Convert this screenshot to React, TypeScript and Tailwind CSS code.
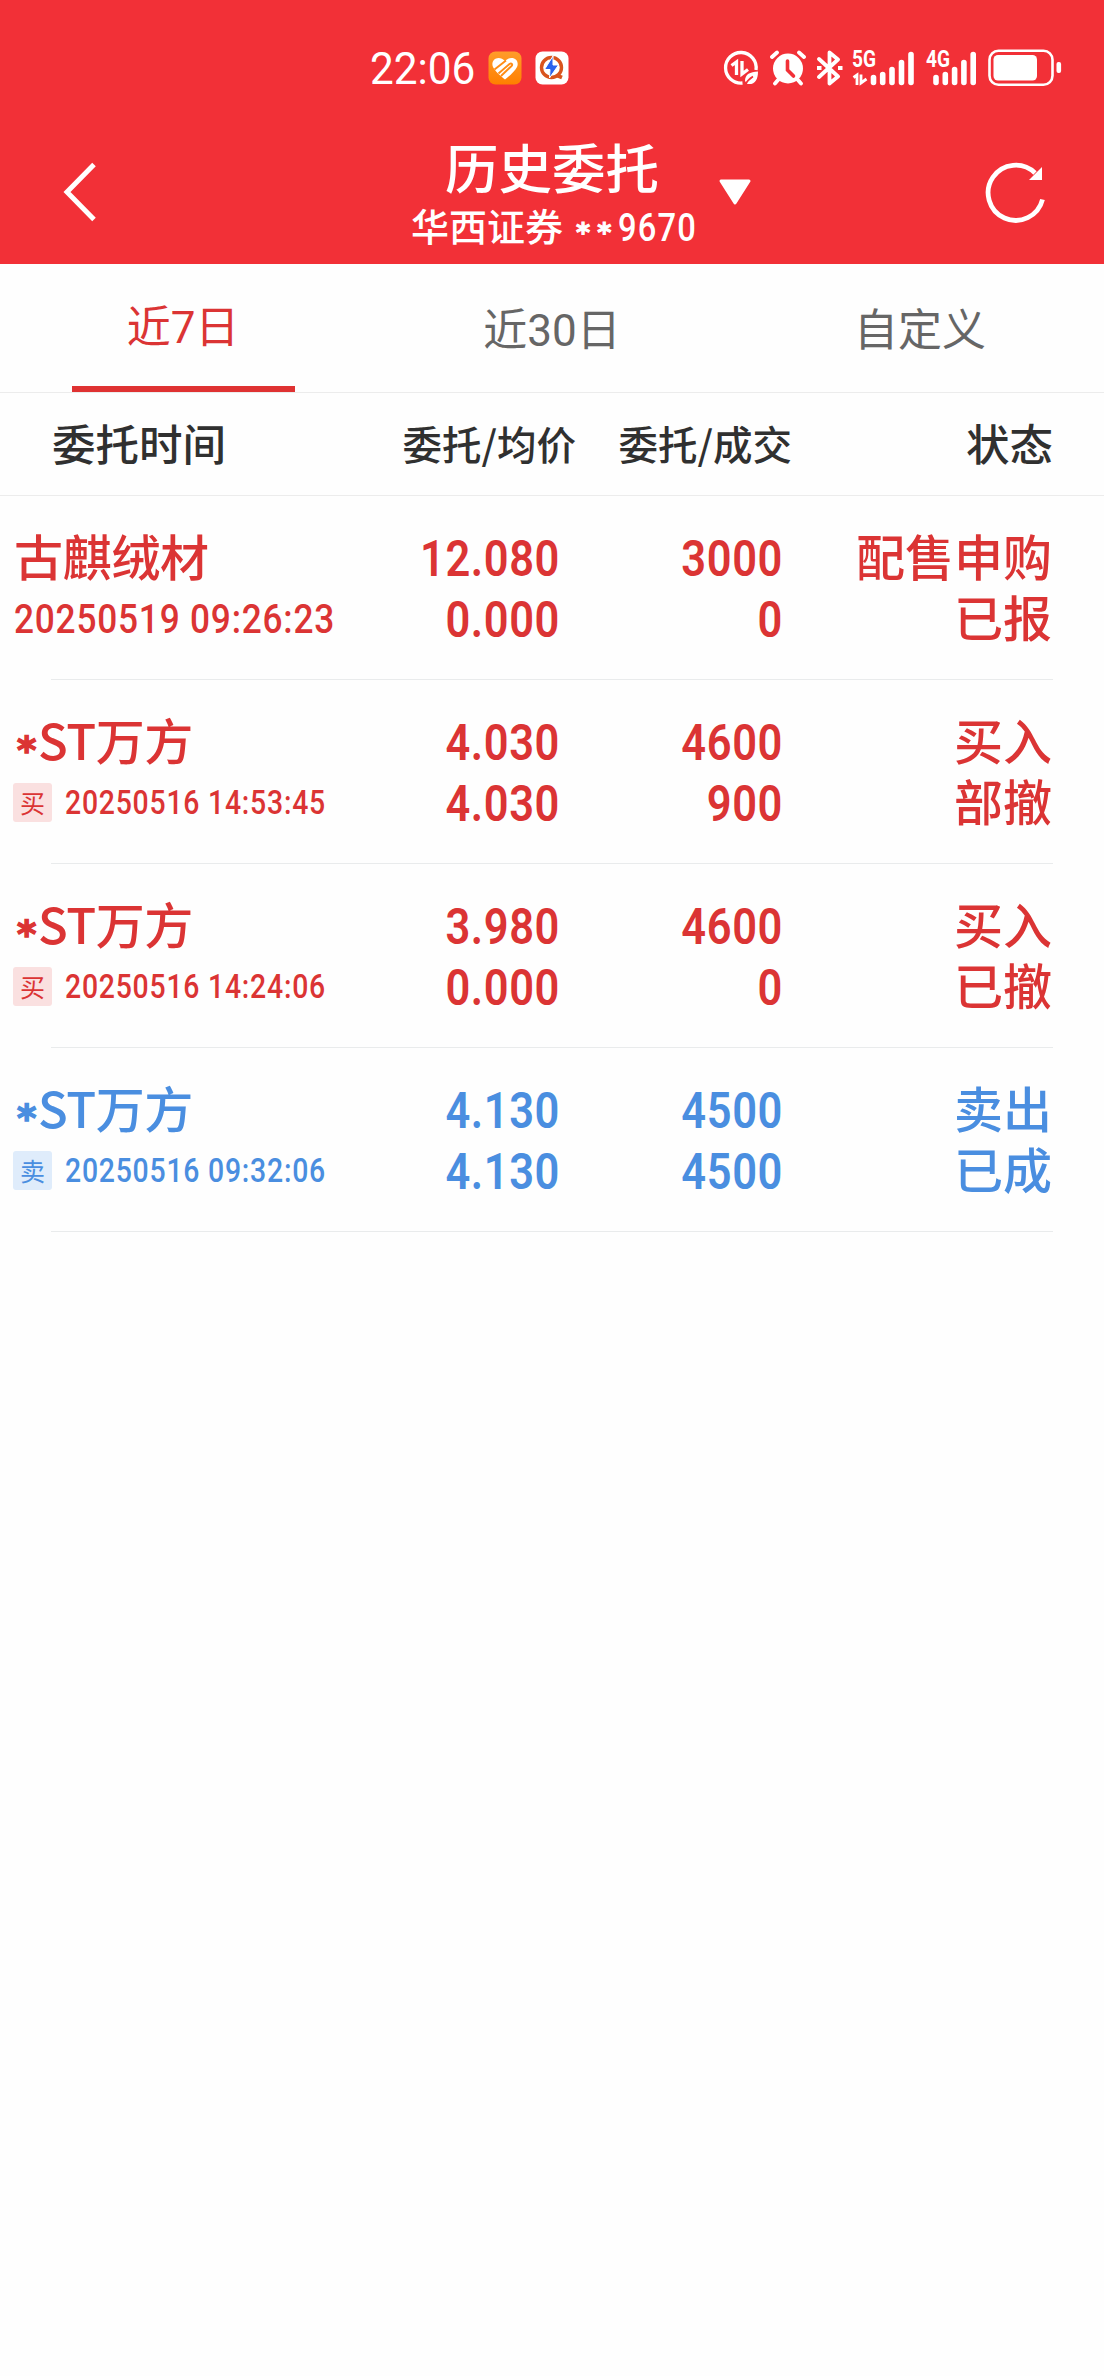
type Order = {
  name: string;
  star?: boolean;
  tag?: string;
  time: string;
  price: string;
  avg: string;
  amount: string;
  deal: string;
  side: string;
  status: string;
};

const orders: Order[] = [
  {
    name: "古麒绒材",
    time: "20250519 09:26:23",
    price: "12.080",
    avg: "0.000",
    amount: "3000",
    deal: "0",
    side: "配售申购",
    status: "已报",
  },
  {
    name: "ST万方",
    star: true,
    tag: "买",
    time: "20250516 14:53:45",
    price: "4.030",
    avg: "4.030",
    amount: "4600",
    deal: "900",
    side: "买入",
    status: "部撤",
  },
  {
    name: "ST万方",
    star: true,
    tag: "买",
    time: "20250516 14:24:06",
    price: "3.980",
    avg: "0.000",
    amount: "4600",
    deal: "0",
    side: "买入",
    status: "已撤",
  },
  {
    name: "ST万方",
    star: true,
    tag: "卖",
    time: "20250516 09:32:06",
    price: "4.130",
    avg: "4.130",
    amount: "4500",
    deal: "4500",
    side: "卖出",
    status: "已成",
  },
];

function Signal({ label, data }: { label: string; data?: boolean }) {
  return (
    <svg className="overflow-visible" width="64" height="40" viewBox="0 0 64 40" fill="#fff">
      <text
        x="0"
        y="18.5"
        fontSize="23"
        fontWeight="700"
        textLength="24"
        lengthAdjust="spacingAndGlyphs"
        className="font-['Roboto',sans-serif]"
      >
        {label}
      </text>
      {data && (
        <path
          d="M1.5 29.5l3.5-2.5v10M9 26.5v8.5l5.5-4"
          fill="none"
          stroke="#fff"
          strokeWidth="2.8"
        />
      )}
      <path
        d={
          data
            ? "M21.5 29.5v5M30.7 26.5v8M40 21.5v13M49.5 14.5v20M59 6.5v28"
            : "M10 29.5v5M19.3 26.5v8M28.6 21.5v13M37.9 14.5v20M47.2 6.5v28"
        }
        stroke="#fff"
        strokeWidth="5.6"
        strokeLinecap="round"
      />
    </svg>
  );
}

function StatusBar() {
  return (
    <div className="flex h-[136px] items-center pl-[370px]">
      <span className="w-[118px] font-['Roboto',sans-serif] text-[45px] leading-none">
        <span className="inline-block origin-left scale-x-[0.94]">22:06</span>
      </span>
      {/* running app badges */}
      <svg width="34" height="34" viewBox="0 0 34 34">
        <defs>
          <linearGradient id="orange" x1="0" y1="0" x2="0" y2="1">
            <stop offset="0" stopColor="#ff9c2b" />
            <stop offset="1" stopColor="#ff7f00" />
          </linearGradient>
        </defs>
        <rect x="0.5" y="0.5" width="33" height="33" rx="7" fill="url(#orange)" />
        <path
          d="M17 28.5C13 25.5 7 20 5 16c-2-4.500 1-9 5.500-9 2.500 0 4.500 1 6.500 3 2-2 4-3 6.500-3 5 0 7.500 4.500 5.500 9-2 4-8 9.500-12 12.500z"
          fill="#fff"
        />
        <path d="M6.500 18.500L18 9.500M10.500 22.500l11-9.500c2-1.500 3.500.5 2 2l-10.500 10" fill="none" stroke="#ff8c14" strokeWidth="1.9" />
      </svg>
      <svg className="ml-[13px]" width="34" height="34" viewBox="0 0 34 34">
        <rect x="0.5" y="0.5" width="33" height="33" rx="7" fill="#fff" />
        <circle cx="16.5" cy="16.5" r="10" fill="none" stroke="#d9541e" strokeWidth="3.4" />
        <path d="M22 24.5l5 2" stroke="#d9541e" strokeWidth="4" />
        <path d="M18 5L9.5 18.5h5.5L14.5 27 23.5 14h-5.5z" fill="#2a62ec" stroke="#fff" strokeWidth="1" />
      </svg>
      {/* system icons */}
      <svg className="ml-[154px]" width="36" height="36" viewBox="0 0 36 36" fill="none" stroke="#fff">
        <path d="M19.5 33A15.3 15.3 0 1 1 33 20" strokeWidth="3.3" />
        <path d="M8.5 15.5l5-3.5v13M19 11v13l6-4.5" strokeWidth="3.3" />
        <path d="M22 31c0-7 5-9 13-9.5 0 8-3 13.5-10.5 12.5z" fill="#fff" stroke="none" />
        <path d="M22 35c2-4 4-6 8-8.5" stroke="#f23037" strokeWidth="1.6" />
      </svg>
      <svg className="ml-[11px]" width="36" height="36" viewBox="0 0 36 36" fill="none" stroke="#fff" strokeLinecap="round">
        <circle cx="18" cy="18.5" r="15" fill="#fff" stroke="none" />
        <path d="M2 7l5-4.5M34 7l-5-4.5M8 30l-3 3.5M28 30l3 3.5" strokeWidth="3.8" />
        <path d="M17.5 11v9l6 6" stroke="#f23037" strokeWidth="3.6" />
      </svg>
      <svg className="ml-[10px]" width="28" height="36" viewBox="0 0 28 36" fill="none" stroke="#fff" strokeWidth="3.8" strokeLinejoin="round">
        <path d="M3 9l19 17.5-8.5 7V2.5l8.5 7L3 27" strokeLinecap="round" />
        <path d="M1 18h4.5M22 18h4.5" />
      </svg>
      <div className="ml-[8px]">
        <Signal label="5G" data />
      </div>
      <div className="ml-[10px]">
        <Signal label="4G" />
      </div>
      <svg className="-ml-[2px]" width="74" height="38" viewBox="0 0 74 38" fill="none">
        <rect x="1.5" y="1.7" width="63" height="34" rx="9" stroke="#fff" strokeWidth="2.6" />
        <rect x="5.5" y="6" width="43.5" height="25.5" rx="4.5" fill="#fff" />
        <rect x="68.5" y="13" width="4.6" height="11" rx="2" fill="#fff" />
      </svg>
    </div>
  );
}

function Header() {
  return (
    <header className="h-[264px] bg-[#f23037] text-white">
      <StatusBar />
      <div className="grid h-[128px] grid-cols-[381px_342px_1fr]">
        <svg className="mt-[26px] ml-[62px]" width="36" height="60" viewBox="0 0 36 60" fill="none">
          <path d="M32 2.5L5 30l27 27.5" stroke="#fff" strokeWidth="5" />
        </svg>
        <div className="flex flex-col items-center whitespace-nowrap">
          <h1 className="text-[53.5px] leading-[60px] font-medium">历史委托</h1>
          <div className="flex h-[58px] w-[282px] items-center text-[38px] leading-[58px] font-medium">
            华西证券
            <span className="ml-[13px] w-[42px] translate-y-[8px] font-['DejaVu_Sans'] text-[27px] font-bold tracking-[7px] [-webkit-text-stroke:1px_currentColor]">
              **
            </span>
            <span className="origin-left translate-y-[3px] scale-x-[0.86] font-['Roboto'] text-[38px] tracking-[1.4px]">
              9670
            </span>
          </div>
        </div>
        <div className="flex items-start">
          <svg className="mt-[42px] -ml-[5px]" width="34" height="29" viewBox="0 0 34 29">
            <path d="M3 3h28L17 25z" fill="#fff" stroke="#fff" strokeWidth="3" strokeLinejoin="round" />
          </svg>
          <svg className="mt-[22px] mr-[54px] ml-auto" width="66" height="66" viewBox="0 0 66 66" fill="none">
            <path d="M58.5 41.5A27.6 27.6 0 1 1 51 15" stroke="#fff" strokeWidth="4.8" />
            <path d="M58 9v13H45z" fill="#fff" />
          </svg>
        </div>
      </div>
    </header>
  );
}

function Tabs() {
  return (
    <nav className="grid h-[129px] grid-cols-3 border-b border-[#ececec] text-center text-[44px] text-[#666]">
      <div className="flex flex-col items-center justify-between pr-[2px] text-[#db3434]">
        <span className="pt-[30px] leading-[60px]">
          近<span className="font-['Roboto']">7</span>日
        </span>
        <div className="h-[6px] w-[223px] bg-[#df3232]" />
      </div>
      <span className="pt-[33px] leading-[60px]">
        近<span className="font-['Roboto']">30</span>日
      </span>
      <span className="pt-[33px] leading-[60px]">自定义</span>
    </nav>
  );
}

function Figures({ top, bottom }: { top: string; bottom: string }) {
  return (
    <div className="origin-right scale-x-[0.86] pt-px text-right font-['Roboto'] text-[50.5px] font-semibold tracking-[0.7px]">
      <div>{top}</div>
      <div>{bottom}</div>
    </div>
  );
}

function OrderRow({ order }: { order: Order }) {
  const sell = order.tag === "卖";
  return (
    <div className={sell ? "text-[#4a8ee0]" : "text-[#db3434]"}>
      <div className="grid h-[183px] grid-cols-[320px_240px_223px_269px] pt-[31px] text-[49px] leading-[61px] font-medium whitespace-nowrap">
        <div className="pl-[14px]">
          <div className="flex -translate-y-[3px]">
            {order.star && (
              <span className="ml-[3px] w-[21px] translate-y-[12px] font-['DejaVu_Sans'] text-[37px] font-bold [-webkit-text-stroke:1.5px_currentColor]">
                *
              </span>
            )}
            <span className={order.star ? "tracking-[-0.5px]" : "tracking-[-0.3px]"}>{order.name}</span>
          </div>
          {order.tag ? (
            <div className="flex h-[61px] items-center">
              <span
                className={
                  sell
                    ? "-ml-[1px] flex h-[39px] w-[39px] shrink-0 items-center justify-center rounded-[3px] bg-[#dfecfb] text-[25px] font-normal"
                    : "-ml-[1px] flex h-[39px] w-[39px] shrink-0 items-center justify-center rounded-[3px] bg-[#fae0e0] text-[25px] font-normal"
                }
              >
                {order.tag}
              </span>
              <span className="ml-[13px] origin-left scale-x-[0.86] font-['Roboto'] text-[33px] tracking-[0.9px]">
                {order.time}
              </span>
            </div>
          ) : (
            <div className="origin-left translate-y-[1px] scale-x-[0.87] font-['Roboto'] text-[40.5px] tracking-[0.9px]">
              {order.time}
            </div>
          )}
        </div>
        <Figures top={order.price} bottom={order.avg} />
        <Figures top={order.amount} bottom={order.deal} />
        <div className="-translate-y-[3px] text-right">
          <div>{order.side}</div>
          <div>{order.status}</div>
        </div>
      </div>
      <div className="mr-[51px] ml-[51px] h-px bg-[#e9ebec]" />
    </div>
  );
}

export default function App() {
  return (
    <div className="min-h-[2376px] w-[1104px] bg-[#fefefe] font-['Noto_Sans_CJK_SC',sans-serif]">
      <Header />
      <Tabs />
      <div className="grid h-[103px] grid-cols-[320px_256px_216px_261px] border-b border-[#ececec] text-right text-[39.5px] leading-[99px] font-medium whitespace-nowrap text-[#303030]">
        <span className="pl-[52px] text-left text-[43.5px]">委托时间</span>
        <span>委托/均价</span>
        <span>委托/成交</span>
        <span className="text-[43.5px]">状态</span>
      </div>
      {orders.map((order) => (
        <OrderRow key={order.time} order={order} />
      ))}
    </div>
  );
}
